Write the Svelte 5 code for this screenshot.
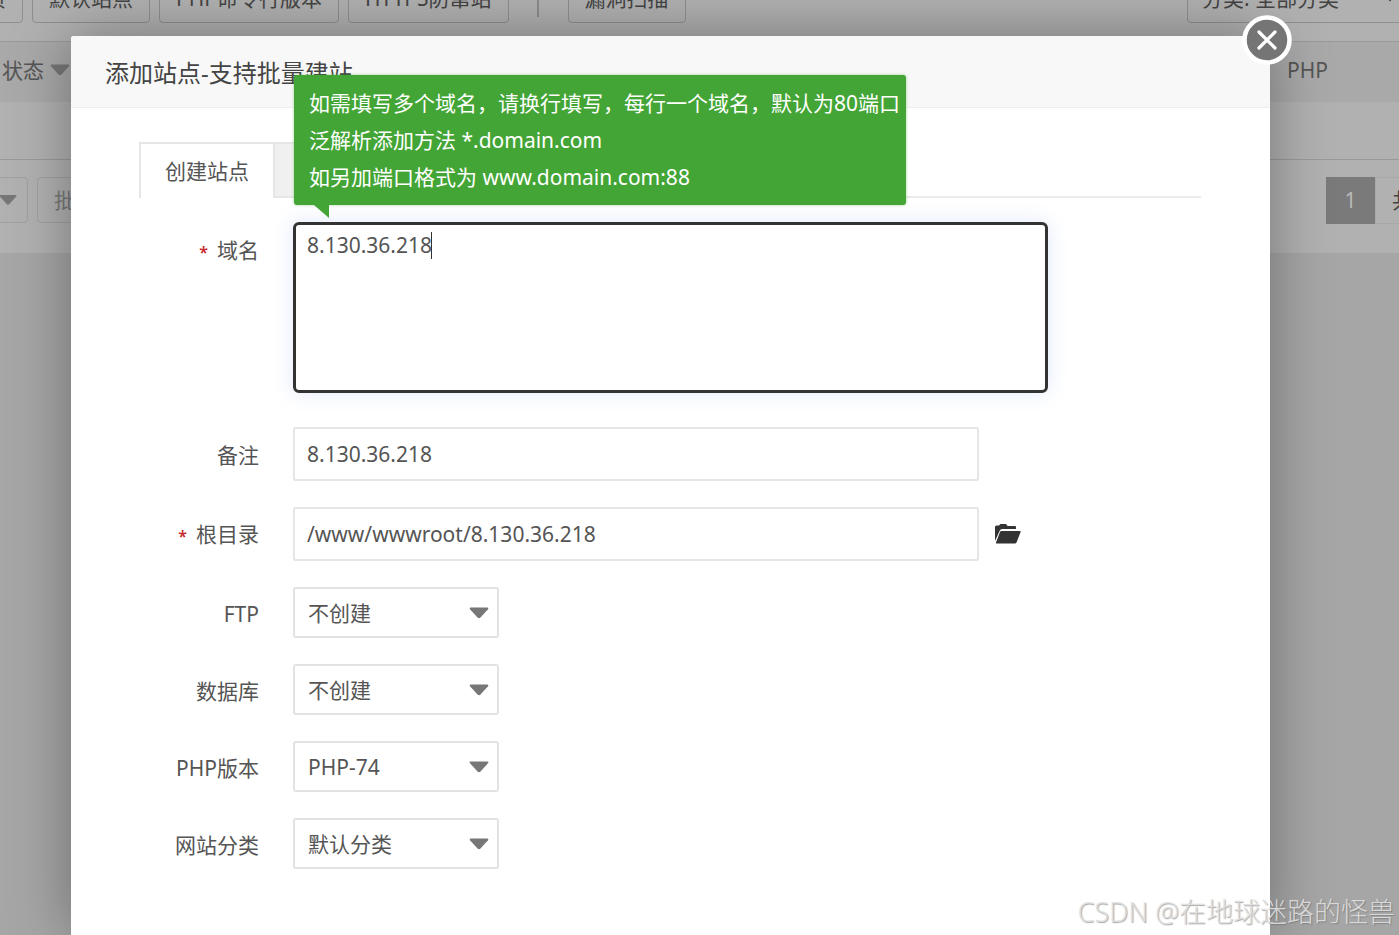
<script lang="ts">
  let domain = $state('8.130.36.218');
  let remark = $state('8.130.36.218');
  let rootPath = $state('/www/wwwroot/8.130.36.218');

  const selects = [
    { id: 'ftp', label: 'FTP', value: '不创建' },
    { id: 'database', label: '数据库', value: '不创建' },
    { id: 'php', label: 'PHP版本', value: 'PHP-74' },
    { id: 'category', label: '网站分类', value: '默认分类' },
  ];
</script>

{#snippet arrow()}
  <svg class="arrow" viewBox="0 0 20 12" width="20" height="12" aria-hidden="true">
    <path d="M1.5 0.5H18.5Q20 1 19 2.3L11.5 10.5Q10 12 8.5 10.5L1 2.3Q0 1 1.5 0.5Z" />
  </svg>
{/snippet}

<div class="page">
  <main class="backdrop">
    <div class="toolbar">
      <button class="btn first">页</button>
      <button class="btn">默认站点</button>
      <button class="btn">PHP命令行版本</button>
      <button class="btn">HTTPS防窜站</button>
      <span class="divider"></span>
      <button class="btn">漏洞扫描</button>
      <button class="btn filter">
        分类: 全部分类
        <svg viewBox="0 0 12 8" width="12" height="8" aria-hidden="true">
          <path d="M1 1l5 5 5-5" fill="none" stroke="currentColor" stroke-width="2" />
        </svg>
      </button>
    </div>

    <table class="sites">
      <thead>
        <tr>
          <th><span class="sort">状态 {@render arrow()}</span></th>
          <th class="php">PHP</th>
        </tr>
      </thead>
      <tbody>
        <tr><td></td><td></td></tr>
      </tbody>
    </table>

    <div class="table-foot">
      <button class="btn batch-select">{@render arrow()}</button>
      <button class="btn muted">批</button>
      <div class="pager">
        <span class="current">1</span>
        <span class="total">共</span>
      </div>
    </div>
  </main>

  <div class="overlay">
    <div class="modal" role="dialog" aria-labelledby="modal-title">
      <button class="close">
        <svg viewBox="0 0 50 50" width="50" height="50" aria-hidden="true">
          <circle cx="25" cy="25" r="22.5" fill="#757575" stroke="#fff" stroke-width="4.5" />
          <path d="M17 17L33 33M33 17L17 33" stroke="#fff" stroke-width="3.2" stroke-linecap="round" />
        </svg>
      </button>

      <header><h1 id="modal-title">添加站点-支持批量建站</h1></header>

      <div class="tabs">
        <button class="tab active">创建站点</button>
        <div class="tab"></div>
      </div>

      <form>
        <div class="row tall">
          <label for="domain"><span class="required">*</span>域名</label>
          <div class="domain">
            <textarea id="domain" bind:value={domain}></textarea>
            <span class="caret"></span>
            <div class="tip">
              如需填写多个域名，请换行填写，每行一个域名，默认为80端口<br />
              泛解析添加方法 *.domain.com<br />
              如另加端口格式为 www.domain.com:88
            </div>
          </div>
        </div>

        <div class="row">
          <label for="remark">备注</label>
          <input id="remark" type="text" bind:value={remark} />
        </div>

        <div class="row">
          <label for="root"><span class="required">*</span>根目录</label>
          <input id="root" type="text" bind:value={rootPath} />
          <button class="folder" type="button">
            <svg viewBox="0 0 26 20" width="26" height="20" aria-hidden="true">
              <path d="M0 17V3Q0 1.500 1.500 1.500H4L5.500 0H11L12.500 2H20Q21 2 21 3V5H7Q5.500 5 4.800 6.500Z" />
              <path d="M6.500 7H25Q26 7 25.600 8L21.500 18.500Q21 19.500 20 19.500H1.500Q0.600 19.500 1 18.500L5 8Q5.500 7 6.500 7Z" />
            </svg>
          </button>
        </div>

        {#each selects as item (item.id)}
          <div class="row">
            <label for={item.id}>{item.label}</label>
            <div class="select">
              <select id={item.id}>
                <option>{item.value}</option>
              </select>
              {@render arrow()}
            </div>
          </div>
        {/each}
      </form>
    </div>
  </div>

  <div class="watermark">CSDN @在地球迷路的怪兽</div>
</div>

<style>
  :global(body) {
    margin: 0;
  }

  .page {
    position: relative;
    min-height: 100vh;
    overflow: hidden;
    background: #a6a6a6;
    color: #555;
    font-family: 'Noto Sans', 'Noto Sans CJK SC', sans-serif;
    font-size: 21px;
    line-height: 30px;
  }

  .page * {
    box-sizing: border-box;
  }

  button,
  input,
  textarea,
  select {
    margin: 0;
    padding: 0;
    border: 0;
    background: none;
    color: inherit;
    font: inherit;
  }

  .arrow {
    fill: #777;
  }

  /* dimmed site list behind the dialog */
  .backdrop {
    background: #b1b1b1;
    color: #444;
  }

  .toolbar {
    display: flex;
    align-items: flex-end;
    gap: 9px;
    height: 41px;
    padding-bottom: 18px;
    overflow: hidden;
  }

  .btn {
    flex: none;
    height: 46px;
    padding: 0 16px;
    border: 1px solid #8f8f8f;
    border-radius: 4px;
    white-space: nowrap;
  }

  .toolbar .btn {
    padding-bottom: 4px;
  }

  .toolbar .first {
    margin-left: -32px;
  }

  .divider {
    width: 2px;
    height: 40px;
    margin: 0 20px 6px 19px;
    background: #8c8c8c;
  }

  .toolbar .filter {
    display: flex;
    justify-content: space-between;
    align-items: center;
    width: 216px;
    margin-left: auto;
    margin-right: -4px;
    padding: 0 6px 4px 14px;
  }

  .sites {
    width: 100%;
    border-collapse: collapse;
    table-layout: fixed;
  }

  .sites th {
    height: 60px;
    padding: 0 2px 4px;
    border-top: 1px solid #999;
    background: #a9a9a9;
    color: #555;
    font-weight: 400;
    text-align: left;
  }

  .sites .php {
    width: 112px;
    padding: 0 0 4px;
  }

  .sort {
    display: flex;
    align-items: center;
    gap: 6px;
  }

  .sites td {
    height: 58px;
    padding: 0;
    border-bottom: 1px solid #999;
  }

  .table-foot {
    display: flex;
    gap: 9px;
    padding: 17px 0 29px;
  }

  .btn.batch-select {
    display: flex;
    justify-content: flex-end;
    align-items: center;
    width: 30px;
    margin-left: -2px;
    padding: 0 10px 0 0;
    border-color: #a0a0a0;
  }

  .btn.muted {
    border-color: #a0a0a0;
    color: #777;
  }

  .pager {
    display: flex;
    height: 47px;
    margin-left: auto;
    line-height: 47px;
  }

  .pager .current {
    width: 49px;
    background: #7a7a7a;
    color: #b8b8b8;
    text-align: center;
  }

  .pager .total {
    width: 24px;
    padding-left: 16px;
    overflow: hidden;
    border: 1px solid #a8a8a8;
    border-right: 0;
    line-height: 45px;
  }

  .overlay {
    position: absolute;
    inset: 0;
    padding: 36px 129px 0 71px;
  }

  .modal {
    position: relative;
    min-height: 100%;
    border-radius: 3px 3px 0 0;
    background: #fff;
    box-shadow: 0 0 60px rgba(0, 0, 0, 0.35);
  }

  .close {
    position: absolute;
    top: -21px;
    right: -22px;
    width: 50px;
    height: 50px;
    cursor: pointer;
  }

  .close svg {
    display: block;
  }

  header {
    height: 72px;
    padding-left: 34px;
    border-bottom: 1px solid #eee;
    border-radius: 3px 3px 0 0;
    background: #f8f8f8;
  }

  h1 {
    margin: 0;
    color: #444;
    font-size: 24px;
    font-weight: 400;
    line-height: 74px;
  }

  .tabs {
    display: flex;
    height: 56px;
    margin: 34px 69px 0 68px;
    box-shadow: inset 0 -2px #ebebeb;
  }

  .tab {
    width: 136px;
    border: 2px solid #e6e6e6;
    border-left-width: 0;
    background: #f0f0f1;
  }

  .tab.active {
    border-left-width: 2px;
    border-bottom: 0;
    background: #fff;
  }

  form {
    display: flex;
    flex-direction: column;
    gap: 26px;
    padding: 24px 68px;
  }

  .row {
    display: flex;
    align-items: center;
  }

  .row.tall {
    align-items: flex-start;
    margin-bottom: 8px;
  }

  label {
    flex: none;
    width: 120px;
    margin-right: 34px;
    padding-top: 2px;
    text-align: right;
  }

  .tall label {
    padding-top: 13px;
  }

  .required {
    margin-right: 9px;
    color: #c8292c;
    font-size: 16px;
    font-weight: 600;
  }

  .domain {
    position: relative;
    flex: 0 1 755px;
  }

  textarea {
    display: block;
    width: 100%;
    height: 171px;
    padding: 5px 11px;
    border: 3px solid #333;
    border-radius: 6px;
    outline: 0;
    box-shadow: 0 0 20px rgba(100, 140, 230, 0.2);
    resize: none;
  }

  .caret {
    position: absolute;
    top: 10px;
    left: 138px;
    width: 1px;
    height: 27px;
    background: #333;
  }

  .tip {
    position: absolute;
    bottom: calc(100% + 17px);
    left: 1px;
    padding: 10px 6px 9px 15px;
    border-radius: 3px;
    background: #43a535;
    box-shadow: 0 0 3px rgba(67, 165, 53, 0.5);
    color: #fff;
    line-height: 37px;
    white-space: nowrap;
  }

  .tip::after {
    content: '';
    position: absolute;
    top: 100%;
    left: 20px;
    border-top: 13px solid #43a535;
    border-left: 15px solid transparent;
  }

  input {
    flex: 0 1 686px;
    min-width: 0;
    height: 54px;
    padding: 0 12px;
    border: 2px solid #e6e6e6;
    border-radius: 2px;
  }

  .folder {
    margin-left: 16px;
    cursor: pointer;
  }

  .folder svg {
    display: block;
    fill: #333;
  }

  .select {
    display: grid;
    align-items: center;
    width: 206px;
  }

  .select > :global(*) {
    grid-area: 1 / 1;
  }

  select {
    height: 51px;
    padding: 0 13px;
    border: 2px solid #e2e2e2;
    border-radius: 3px;
    appearance: none;
  }

  .select .arrow {
    justify-self: end;
    margin-right: 10px;
    pointer-events: none;
  }

  .watermark {
    position: absolute;
    right: 4px;
    bottom: 4px;
    color: rgba(225, 225, 225, 0.9);
    font-size: 27px;
    font-weight: 300;
    line-height: 38px;
    text-shadow: 1px 1px 1px rgba(110, 110, 110, 0.6);
  }
</style>
